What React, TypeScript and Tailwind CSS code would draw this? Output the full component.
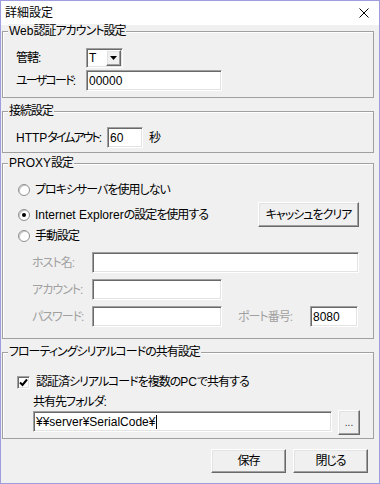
import React from "react";

const sunken =
  "flex shrink-0 items-center bg-white border border-t-[#a0a0a0] border-l-[#a0a0a0] border-r-white border-b-white shadow-[inset_1px_1px_0_#696969,inset_-1px_-1px_0_#e3e3e3]";
const raised =
  "flex shrink-0 items-center justify-center bg-[#f0f0f0] border border-t-white border-l-white border-r-[#696969] border-b-[#696969] shadow-[inset_-1px_-1px_0_#a0a0a0,inset_1px_1px_0_#e3e3e3]";
const label = "shrink-0 whitespace-nowrap";
const latin = "tracking-normal";

function Group({ title, className, children }: { title: React.ReactNode; className: string; children: React.ReactNode }) {
  return (
    <div className={`border border-[#a0a0a0] shadow-[inset_1px_1px_0_#fff] ${className}`}>
      <div className="-mt-[8px] ml-[5px] w-fit whitespace-nowrap bg-[#f0f0f0] px-[1px] leading-[14px]">{title}</div>
      {children}
    </div>
  );
}

function Radio({ checked }: { checked?: boolean }) {
  return (
    <span className="flex h-[12px] w-[12px] shrink-0 items-center justify-center rounded-full border border-[#8f8f8f] bg-white shadow-[inset_1px_1px_0_#c8c8c8]">
      {checked && <span className="h-[4px] w-[4px] rounded-full bg-black" />}
    </span>
  );
}

export default function App() {
  return (
    <div className="flex h-[484px] w-[380px] flex-col overflow-hidden border border-[#9d9ddf] bg-[#f0f0f0] text-[12px] leading-[14px] tracking-[-1px] text-black font-['Liberation_Sans','Noto_Sans_CJK_JP',sans-serif] [font-feature-settings:'palt']">
      {/* タイトルバー */}
      <div className="flex h-[24px] shrink-0 items-center bg-white pl-[4px]">
        <span className="tracking-normal">詳細設定</span>
        <svg className="ml-auto mr-[10px]" width="10" height="10" viewBox="0 0 10 10">
          <path d="M0.5 0.5L9.5 9.5M9.5 0.5L0.5 9.5" stroke="#000" strokeWidth="1" />
        </svg>
      </div>

      <div className="flex flex-1 flex-col pl-[1px] pr-[5px]">
        {/* Web認証 */}
        <Group title={<><span className={latin}>Web</span>認証アカウント設定</>} className="mt-[6px]">
          <div className="mt-[10px] flex flex-col gap-[2px] pb-[6px] pl-[13px]">
            <div className="flex h-[20px] items-center">
              <span className={`${label} w-[70px]`}>管轄:</span>
              <div className={`${sunken} h-[20px] w-[37px] ${latin}`}>
                <span className="flex-1 pl-[2px]">T</span>
                <div className={`${raised} mr-[1px] h-[16px] w-[15px]`}>
                  <svg width="7" height="4" viewBox="0 0 7 4">
                    <polygon points="0,0 7,0 3.5,4" fill="#000" />
                  </svg>
                </div>
              </div>
            </div>
            <div className="flex items-center">
              <span className={`${label} w-[70px] tracking-[-1.8px]`}>ユーザコード:</span>
              <div className={`${sunken} h-[21px] w-[136px] pl-[2px] ${latin}`}>00000</div>
            </div>
          </div>
        </Group>

        {/* 接続設定 */}
        <Group title="接続設定" className="mt-[13px]">
          <div className="mt-[9px] flex items-center pb-[4px] pl-[13px]">
            <span className={`${label} w-[91px] tracking-[-2px]`}>
              <span className={latin}>HTTP</span>タイムアウト:
            </span>
            <div className={`${sunken} h-[21px] w-[36px] pl-[2px] ${latin}`}>60</div>
            <span className="ml-[6px]">秒</span>
          </div>
        </Group>

        {/* PROXY設定 */}
        <Group title={<><span className={latin}>PROXY</span>設定</>} className="mt-[10px]">
          <div className="flex flex-col pb-[11px] pl-[15px] pr-[14px]">
            <div className="mt-[12px] flex h-[16px] items-center gap-[5px]">
              <Radio />
              <span className={label}>プロキシサーバを使用しない</span>
            </div>
            <div className="mt-[4px] flex h-[25px] items-center gap-[5px]">
              <Radio checked />
              <span className={label}>
                <span className={latin}>Internet Explorer</span>の設定を使用する
              </span>
              <div className={`${raised} ml-auto h-[25px] w-[101px]`}>キャッシュをクリア</div>
            </div>
            <div className="mt-[1px] flex h-[16px] items-center gap-[5px]">
              <Radio />
              <span className={label}>手動設定</span>
            </div>
            <div className="ml-[14px] mt-[8px] flex items-center text-[#a0a0a0]">
              <span className={`${label} w-[60px]`}>ホスト名:</span>
              <div className={`${sunken} h-[21px] flex-1`} />
            </div>
            <div className="ml-[14px] mt-[6px] flex items-center text-[#a0a0a0]">
              <span className={`${label} w-[60px]`}>アカウント:</span>
              <div className={`${sunken} h-[21px] w-[130px]`} />
            </div>
            <div className="ml-[14px] mt-[6px] flex items-center text-[#a0a0a0]">
              <span className={`${label} w-[60px]`}>パスワード:</span>
              <div className={`${sunken} h-[21px] w-[130px]`} />
              <span className={`${label} ml-[16px] w-[72px]`}>ポート番号:</span>
              <div className={`${sunken} h-[21px] w-[48px] pl-[2px] text-black ${latin}`}>8080</div>
            </div>
          </div>
        </Group>

        {/* フローティング */}
        <Group title="フローティングシリアルコードの共有設定" className="mt-[13px]">
          <div className="flex flex-col pb-[3px] pl-[14px] pr-[14px]">
            <div className="mt-[15px] flex h-[16px] items-center gap-[5px]">
              <span className={`${sunken} h-[13px] w-[13px] justify-center`}>
                <svg width="9" height="9" viewBox="0 0 9 9">
                  <path d="M1 4.5L3.5 7L8 1.5" stroke="#000" strokeWidth="2" fill="none" />
                </svg>
              </span>
              <span className={`${label} ml-[1px]`}>
                認証済シリアルコードを複数の<span className={latin}>PC</span>で共有する
              </span>
            </div>
            <div className="ml-[16px] mt-[5px]">共有先フォルダ:</div>
            <div className="ml-[16px] mt-[1px] flex items-start gap-[6px]">
              <div className={`${sunken} mt-[1px] h-[21px] w-[299px] pl-[2px] ${latin}`}>
                <span className={label}>¥¥server¥SerialCode¥</span>
                <span className="ml-[1px] h-[14px] w-px bg-black" />
              </div>
              <div className={`${raised} h-[25px] w-[22px] text-[10px] text-[#333] ${latin}`}>...</div>
            </div>
          </div>
        </Group>

        {/* ボタン */}
        <div className="mt-[10px] flex justify-end gap-[7px] pr-[6px]">
          <div className={`${raised} h-[24px] w-[75px]`}>保存</div>
          <div className={`${raised} h-[24px] w-[75px]`}>閉じる</div>
        </div>
      </div>
    </div>
  );
}
